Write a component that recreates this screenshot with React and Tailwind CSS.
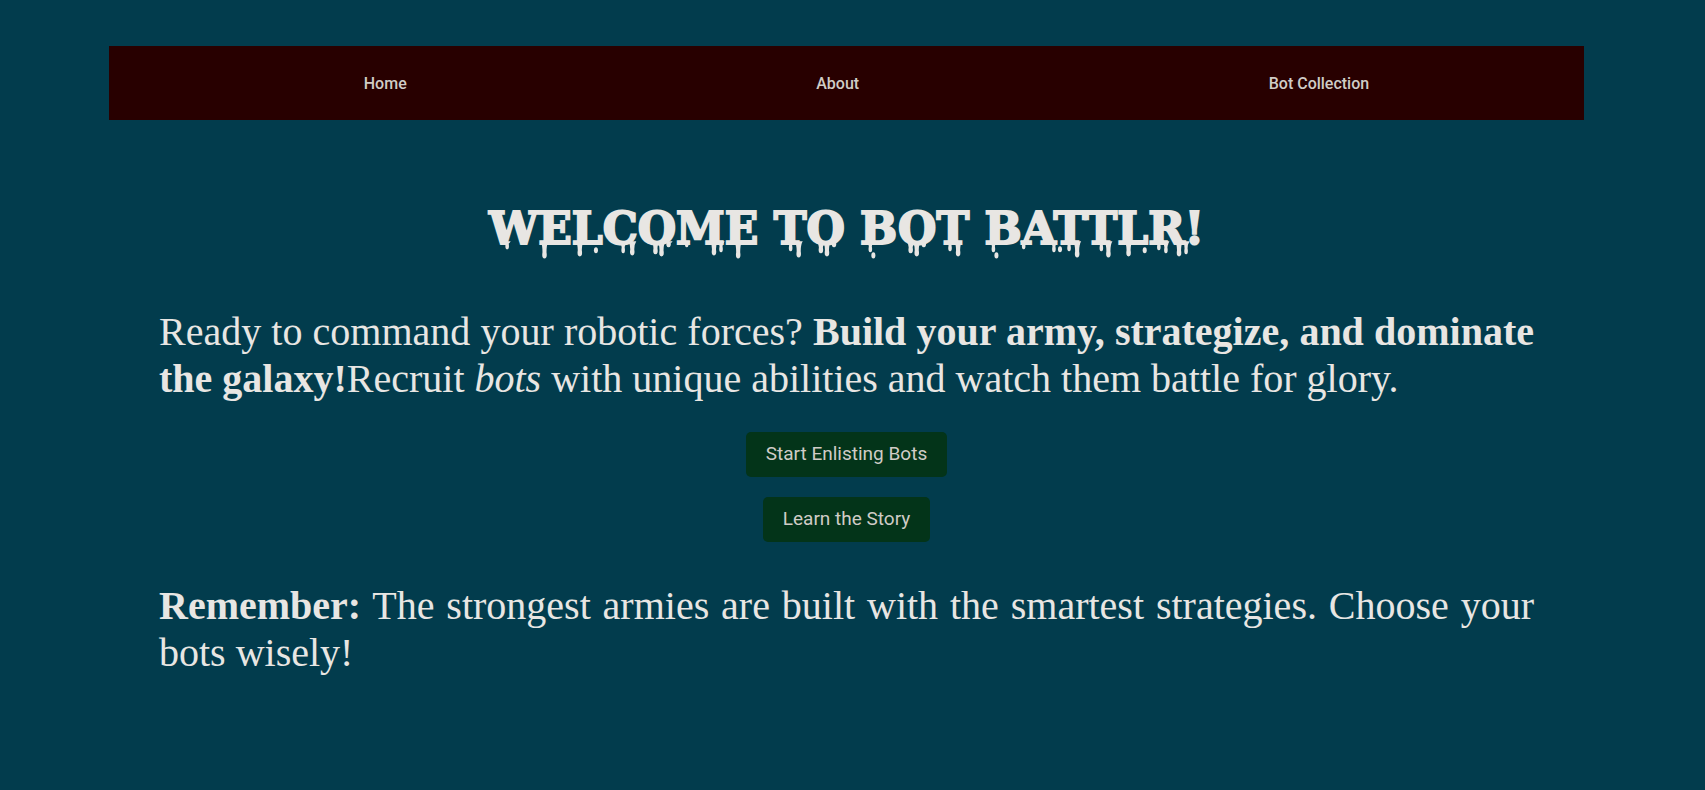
const navLinks = [
  { label: "Home", href: "#home" },
  { label: "About", href: "#about" },
  { label: "Bot Collection", href: "#bots" },
];

// Drips under the title: [x, tip y, stem width]. The baseline is y = 30.
const drips = [
  [18, 35, 3], [55, 44, 4], [90, 42, 4], [133, 39, 3], [142, 41, 4],
  [165, 40, 4], [171, 42, 4], [178, 33, 4], [196, 33, 3],
  [223, 41, 4], [230, 38, 3], [247, 44, 4], [299, 37, 3], [307, 43, 4],
  [329, 39, 4], [335, 42, 4], [342, 33, 4], [378, 38, 3], [418, 39, 4],
  [424, 42, 4], [431, 33, 4], [457, 37, 3], [465, 42, 4], [500, 38, 3],
  [530, 35, 3], [560, 38, 3], [575, 37, 3], [583, 43, 4], [607, 37, 3],
  [614, 43, 4], [634, 42, 4], [664, 36, 3], [671, 39, 3], [684, 42, 4],
  [691, 40, 3],
];

const drops = [
  [106, 38], [381, 43], [503, 43], [566, 37], [650, 38],
];

function TitleDrips() {
  return (
    <svg
      viewBox="0 0 709 48"
      className="absolute inset-x-0 top-[11px] w-full fill-[#e8e6e3]"
      aria-hidden="true"
    >
      {drips.map(([x, tip, w]) => (
        <path
          key={x}
          d={`M${x - w / 2 - 2} 29H${x + w / 2 + 2}Q${x + w / 2} 32 ${x + w / 2} ${tip - 4}Q${x + w / 2 + 1} ${tip + 2} ${x} ${tip + 2}Q${x - w / 2 - 1} ${tip + 2} ${x - w / 2} ${tip - 4}Q${x - w / 2} 32 ${x - w / 2 - 2} 29Z`}
        />
      ))}
      {drops.map(([x, y]) => (
        <ellipse key={x} cx={x} cy={y} rx="2" ry="3" />
      ))}
    </svg>
  );
}

function ActionButton({ children }) {
  return (
    <button
      type="button"
      className="rounded-[5px] bg-[#033419] px-5 pt-[9px] pb-[11px] font-['Roboto',sans-serif] text-[19px] leading-[25px] text-[#d0ccc6]"
    >
      {children}
    </button>
  );
}

export default function App() {
  return (
    <div className="min-h-screen bg-[#023c4d] pt-[46px] pr-[121px] pl-[109px] font-['Liberation_Serif',serif] text-[#e8e6e3]">
      <nav className="bg-[#280000] pr-2.5 pl-[50px]">
        <ul className="flex h-[74px] items-center justify-around pt-0.5 font-['Roboto',sans-serif] text-base font-medium text-[#d0ccc6]">
          {navLinks.map((link) => (
            <li key={link.href}>
              <a href={link.href}>{link.label}</a>
            </li>
          ))}
        </ul>
      </nav>
      <main className="px-[50px] pt-[81px]">
        <h1 className="text-center font-['DejaVu_Serif',serif] text-[44px] leading-[56px] font-bold [-webkit-text-stroke:2px_#e8e6e3]">
          <span className="relative inline-block whitespace-nowrap">
            WELCOME TO BOT BATTLR!
            <TitleDrips />
          </span>
        </h1>
        <p className="mt-[51px] text-justify text-[40px] leading-[47px]">
          Ready to command your robotic forces?{" "}
          <strong>Build your army, strategize, and dominate the galaxy!</strong>
          Recruit <em>bots</em> with unique abilities and watch them battle for
          glory.
        </p>
        <div className="mt-[30px] flex flex-col items-center gap-5">
          <ActionButton>Start Enlisting Bots</ActionButton>
          <ActionButton>Learn the Story</ActionButton>
        </div>
        <p className="mt-10 text-justify text-[40px] leading-[47px]">
          <strong>Remember:</strong> The strongest armies are built with the
          smartest strategies. Choose your bots wisely!
        </p>
      </main>
    </div>
  );
}
